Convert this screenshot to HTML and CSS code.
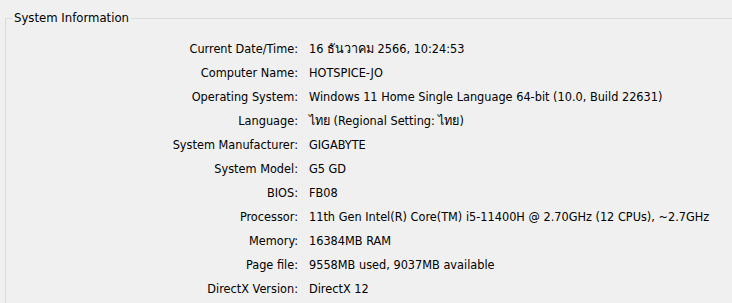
FILE: index.html
```html
<!DOCTYPE html>
<html lang="en">
<head>
    <meta charset="UTF-8">
    <title>System Information</title>
    <link rel="stylesheet" href="styles.css">
</head>
<body>
    <!-- System Information group box -->
    <fieldset class="group">
        <legend>System Information</legend>
        <div class="info">
            <span class="label">Current Date/Time:</span><span class="value">16 ธันวาคม 2566, 10:24:53</span>
            <span class="label">Computer Name:</span><span class="value">HOTSPICE-JO</span>
            <span class="label">Operating System:</span><span class="value">Windows 11 Home Single Language 64-bit (10.0, Build 22631)</span>
            <span class="label">Language:</span><span class="value">ไทย (Regional Setting: ไทย)</span>
            <span class="label">System Manufacturer:</span><span class="value">GIGABYTE</span>
            <span class="label">System Model:</span><span class="value">G5 GD</span>
            <span class="label">BIOS:</span><span class="value">FB08</span>
            <span class="label">Processor:</span><span class="value">11th Gen Intel(R) Core(TM) i5-11400H @ 2.70GHz (12 CPUs), ~2.7GHz</span>
            <span class="label">Memory:</span><span class="value">16384MB RAM</span>
            <span class="label">Page file:</span><span class="value">9558MB used, 9037MB available</span>
            <span class="label">DirectX Version:</span><span class="value">DirectX 12</span>
        </div>
    </fieldset>
</body>
</html>
```
FILE: styles.css
```css
body {
    margin: 0;
    background-color: #f0f0f0;
    font-family: "DejaVu Sans Condensed", "DejaVu Sans", "Noto Sans", sans-serif;
    font-size: 12.6px;
    color: #000;
    overflow: hidden;
    height: 303px;
}
.group {
    box-sizing: border-box;
    margin: 10px 0 0 5px;
    padding: 0;
    height: 293px;
    border: 1px solid #dcdcdc;
    border-right: none;
    border-bottom: none;
}
.group legend {
    margin-left: 6px;
    padding: 0 2px;
    line-height: 16px;
    font-size: 13px;
}
.info {
    display: grid;
    grid-template-columns: 292px auto;
    column-gap: 11px;
    padding-top: 11px;
    line-height: 24px;
}
.label {
    text-align: right;
    white-space: nowrap;
}
.value {
    white-space: nowrap;
}
```
